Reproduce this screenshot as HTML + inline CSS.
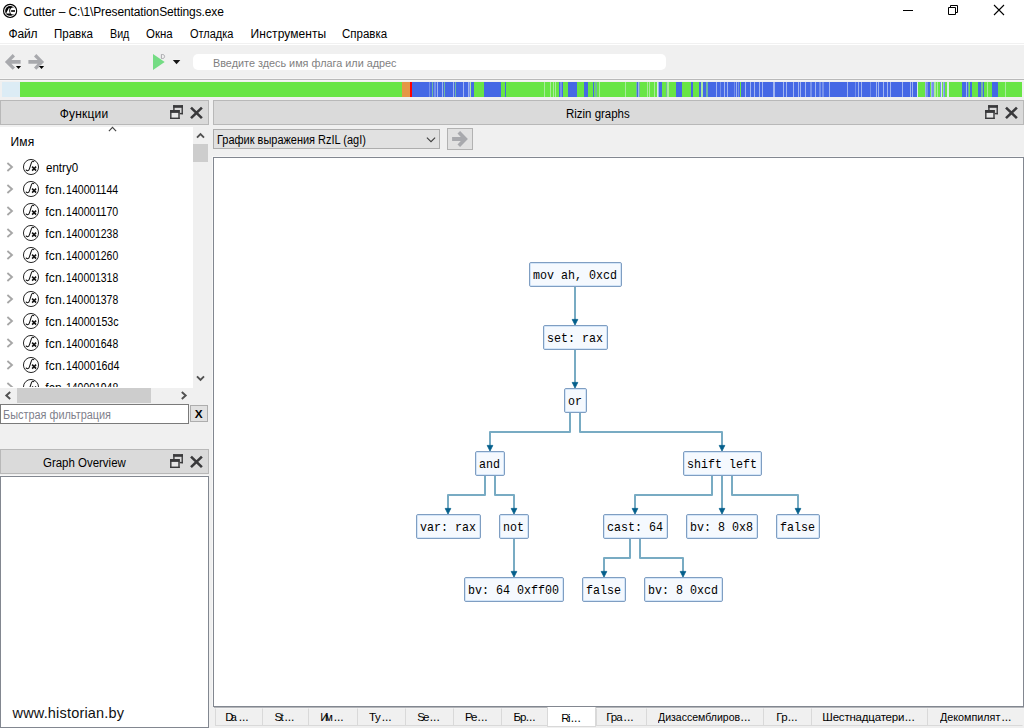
<!DOCTYPE html>
<html lang="ru"><head><meta charset="utf-8"><title>Cutter</title>
<style>
html,body{margin:0;padding:0}
body{width:1024px;height:728px;position:relative;overflow:hidden;background:#f0f0f0;
 font-family:"Liberation Sans",sans-serif;font-size:12px;color:#000}
.abs,.txt span,.ico,.node,.edges,.navbar{position:absolute}
.txt span{white-space:pre;line-height:20px;display:block;transform-origin:0 0}
.white{background:#fff}
.dtitle{background:#dadada;border:1px solid #b8b8b8;box-sizing:border-box}
.view{background:#fff;border:1px solid #828790;box-sizing:border-box;box-shadow:-1px -1px 0 #f7f7f7}
.node{height:25px;box-sizing:border-box;border:1px solid #7f9ec2;border-radius:2px;background:#f5f9fe;
 box-shadow:inset 0 0 0 1px #d3e5f8;font-family:"Liberation Mono",monospace;font-size:13px;
 line-height:24px;white-space:pre;color:#000;overflow:hidden}
.node span{display:block;position:absolute;left:2.6px;top:1px;transform:scaleX(0.8974);transform-origin:0 0}
.edges{left:0;top:0;pointer-events:none}
.navbar{left:2px;top:82px}
.tab{position:absolute;top:708px;height:18px;box-sizing:border-box;border:1px solid #d9d9d9;border-top-color:#f4f4f4;background:#f0f0f0}
.btn{background:#e1e1e1;border:1px solid #adadad;box-sizing:border-box}
.clip{position:absolute;overflow:hidden}
</style></head>
<body>
<div class="abs white" style="left:0;top:0;width:1024px;height:43px"></div>
<div class="abs" style="left:0;top:43px;width:1024px;height:1px;background:#f1f1f1"></div>
<div class="abs white" style="left:0;top:44px;width:1024px;height:1px"></div>
<svg class="ico" style="left:2px;top:3px" width="17" height="16" viewBox="2 3 17 16"><circle cx="10.1" cy="10.9" r="6.55" fill="#fff" stroke="#000" stroke-width="1.15"/><circle cx="10.1" cy="10.9" r="4.95" fill="#000"/><path d="M8.9,7.9 L6.1,13.5 H9.9 Q8.6,10.6 9.6,7.9 Z" fill="#fff"/><ellipse cx="12.9" cy="11" rx="2.75" ry="3.5" fill="#fff"/><rect x="11.1" y="10.2" width="3.9" height="1.6" fill="#000"/></svg>
<svg class="ico" style="left:896px;top:0" width="128" height="24" viewBox="896 0 128 24" fill="none" stroke="#000" stroke-width="1"><path d="M903,10.5 H913"/><path d="M948.5,7.5 H955.5 V14.5 H948.5 Z M950.5,7.5 V5.5 H957.5 V12.5 H955.5"/><path d="M994,5 L1004,15 M1004,5 L994,15" stroke-width="1.1"/></svg>
<div class="abs" style="left:0;top:78px;width:1024px;height:3px;background:#f5f5f5"></div><div class="abs" style="left:0;top:79px;width:1024px;height:1px;background:#b9b9b9"></div>
<svg class="ico" style="left:0;top:50px" width="50" height="24" viewBox="0 50 50 24"><g fill="#a8a9ad"><path d="M4.9,61.9 L12.7,54.0 L15.0,56.4 L11.4,60.1 L20.6,60.1 L20.6,63.7 L11.4,63.7 L15.0,67.4 L12.7,69.8 Z"/><path d="M44.1,61.9 L36.3,54.0 L34.0,56.4 L37.6,60.1 L28.4,60.1 L28.4,63.7 L37.6,63.7 L34.0,67.4 L36.3,69.8 Z"/></g><g fill="#000" stroke="#f6f6f6" stroke-width="0.6" paint-order="stroke"><path d="M15.9,66 H21.1 L18.5,68.9 Z"/><path d="M38.9,66 H44.1 L41.5,68.9 Z"/></g></svg>
<svg class="ico" style="left:150px;top:50px" width="36" height="24" viewBox="150 50 36 24"><path d="M153,53.9 L164.7,61.95 L153,70 Z" fill="#74dc84"/><path d="M161.4,54.5 V58.5 H162.5 C165.3,58.5 165.3,54.5 162.5,54.5 Z" fill="none" stroke="#a2a2a6" stroke-width="0.9"/><path d="M172.8,60 H180.3 L176.55,64.3 Z" fill="#151515" stroke="#f8f8f8" stroke-width="0.6" paint-order="stroke"/></svg>
<div class="abs white" style="left:193px;top:54px;width:473px;height:16px;border-radius:5px"></div>
<svg class="navbar" width="1020" height="15" viewBox="0 0 1020 15" shape-rendering="crispEdges"><rect x="0" y="0" width="18" height="15" fill="#dcecf5"/><rect x="18" y="0" width="382" height="15" fill="#68e545"/><rect x="400" y="0" width="8" height="15" fill="#e59645"/><rect x="408" y="0" width="2" height="15" fill="#ff0000"/><rect x="410" y="0" width="17" height="15" fill="#4568e5"/><rect x="427" y="0" width="1" height="15" fill="#7590ea"/><rect x="428" y="0" width="2" height="15" fill="#4568e5"/><rect x="430" y="0" width="1" height="15" fill="#70b8a0"/><rect x="431" y="0" width="1" height="15" fill="#4568e5"/><rect x="432" y="0" width="2" height="15" fill="#7590ea"/><rect x="434" y="0" width="1" height="15" fill="#4568e5"/><rect x="435" y="0" width="1" height="15" fill="#a0b4f0"/><rect x="436" y="0" width="4" height="15" fill="#4568e5"/><rect x="440" y="0" width="1" height="15" fill="#a0b4f0"/><rect x="441" y="0" width="1" height="15" fill="#4568e5"/><rect x="442" y="0" width="1" height="15" fill="#70b8a0"/><rect x="443" y="0" width="8" height="15" fill="#4568e5"/><rect x="451" y="0" width="1" height="15" fill="#a0b4f0"/><rect x="452" y="0" width="1" height="15" fill="#4568e5"/><rect x="453" y="0" width="1" height="15" fill="#70b8a0"/><rect x="454" y="0" width="7" height="15" fill="#4568e5"/><rect x="461" y="0" width="1" height="15" fill="#a0b4f0"/><rect x="462" y="0" width="4" height="15" fill="#4568e5"/><rect x="466" y="0" width="1" height="15" fill="#a0b4f0"/><rect x="467" y="0" width="1" height="15" fill="#7590ea"/><rect x="468" y="0" width="1" height="15" fill="#a8eb9c"/><rect x="469" y="0" width="3" height="15" fill="#4568e5"/><rect x="472" y="0" width="10" height="15" fill="#68e545"/><rect x="482" y="0" width="17" height="15" fill="#4568e5"/><rect x="499" y="0" width="4" height="15" fill="#68e545"/><rect x="503" y="0" width="1" height="15" fill="#4568e5"/><rect x="504" y="0" width="38" height="15" fill="#68e545"/><rect x="542" y="0" width="1" height="15" fill="#a8eb9c"/><rect x="543" y="0" width="5" height="15" fill="#68e545"/><rect x="548" y="0" width="1" height="15" fill="#a8eb9c"/><rect x="549" y="0" width="2" height="15" fill="#68e545"/><rect x="551" y="0" width="1" height="15" fill="#a8eb9c"/><rect x="552" y="0" width="1" height="15" fill="#68e545"/><rect x="553" y="0" width="1" height="15" fill="#a8eb9c"/><rect x="554" y="0" width="3" height="15" fill="#68e545"/><rect x="557" y="0" width="1" height="15" fill="#4568e5"/><rect x="558" y="0" width="2" height="15" fill="#7590ea"/><rect x="560" y="0" width="1" height="15" fill="#4568e5"/><rect x="561" y="0" width="5" height="15" fill="#68e545"/><rect x="566" y="0" width="9" height="15" fill="#4568e5"/><rect x="575" y="0" width="7" height="15" fill="#68e545"/><rect x="582" y="0" width="4" height="15" fill="#4568e5"/><rect x="586" y="0" width="5" height="15" fill="#68e545"/><rect x="591" y="0" width="1" height="15" fill="#4568e5"/><rect x="592" y="0" width="1" height="15" fill="#68e545"/><rect x="593" y="0" width="2" height="15" fill="#70b8a0"/><rect x="595" y="0" width="2" height="15" fill="#68e545"/><rect x="597" y="0" width="1" height="15" fill="#a8eb9c"/><rect x="598" y="0" width="25" height="15" fill="#68e545"/><rect x="623" y="0" width="1" height="15" fill="#a8eb9c"/><rect x="624" y="0" width="10" height="15" fill="#68e545"/><rect x="634" y="0" width="1" height="15" fill="#70b8a0"/><rect x="635" y="0" width="1" height="15" fill="#4568e5"/><rect x="636" y="0" width="1" height="15" fill="#a0b4f0"/><rect x="637" y="0" width="1" height="15" fill="#70b8a0"/><rect x="638" y="0" width="7" height="15" fill="#68e545"/><rect x="645" y="0" width="1" height="15" fill="#a8eb9c"/><rect x="646" y="0" width="1" height="15" fill="#68e545"/><rect x="647" y="0" width="1" height="15" fill="#a8eb9c"/><rect x="648" y="0" width="4" height="15" fill="#68e545"/><rect x="652" y="0" width="1" height="15" fill="#a8eb9c"/><rect x="653" y="0" width="2" height="15" fill="#68e545"/><rect x="655" y="0" width="1" height="15" fill="#d8ece8"/><rect x="656" y="0" width="1" height="15" fill="#a0b4f0"/><rect x="657" y="0" width="3" height="15" fill="#4568e5"/><rect x="660" y="0" width="4" height="15" fill="#68e545"/><rect x="664" y="0" width="1" height="15" fill="#70b8a0"/><rect x="665" y="0" width="2" height="15" fill="#a8eb9c"/><rect x="667" y="0" width="7" height="15" fill="#68e545"/><rect x="674" y="0" width="6" height="15" fill="#4568e5"/><rect x="680" y="0" width="9" height="15" fill="#68e545"/><rect x="689" y="0" width="2" height="15" fill="#4568e5"/><rect x="691" y="0" width="6" height="15" fill="#68e545"/><rect x="697" y="0" width="2" height="15" fill="#4568e5"/><rect x="699" y="0" width="2" height="15" fill="#a8eb9c"/><rect x="701" y="0" width="3" height="15" fill="#4568e5"/><rect x="704" y="0" width="2" height="15" fill="#70b8a0"/><rect x="706" y="0" width="8" height="15" fill="#4568e5"/><rect x="714" y="0" width="1" height="15" fill="#a0b4f0"/><rect x="715" y="0" width="3" height="15" fill="#4568e5"/><rect x="718" y="0" width="1" height="15" fill="#7590ea"/><rect x="719" y="0" width="3" height="15" fill="#4568e5"/><rect x="722" y="0" width="1" height="15" fill="#a0b4f0"/><rect x="723" y="0" width="2" height="15" fill="#4568e5"/><rect x="725" y="0" width="1" height="15" fill="#a0b4f0"/><rect x="726" y="0" width="6" height="15" fill="#4568e5"/><rect x="732" y="0" width="1" height="15" fill="#7590ea"/><rect x="733" y="0" width="1" height="15" fill="#4568e5"/><rect x="734" y="0" width="1" height="15" fill="#a0b4f0"/><rect x="735" y="0" width="1" height="15" fill="#4568e5"/><rect x="736" y="0" width="1" height="15" fill="#7590ea"/><rect x="737" y="0" width="1" height="15" fill="#4568e5"/><rect x="738" y="0" width="1" height="15" fill="#68e545"/><rect x="739" y="0" width="4" height="15" fill="#4568e5"/><rect x="743" y="0" width="1" height="15" fill="#a0b4f0"/><rect x="744" y="0" width="4" height="15" fill="#4568e5"/><rect x="748" y="0" width="1" height="15" fill="#a0b4f0"/><rect x="749" y="0" width="3" height="15" fill="#4568e5"/><rect x="752" y="0" width="1" height="15" fill="#a0b4f0"/><rect x="753" y="0" width="4" height="15" fill="#4568e5"/><rect x="757" y="0" width="1" height="15" fill="#a0b4f0"/><rect x="758" y="0" width="2" height="15" fill="#4568e5"/><rect x="760" y="0" width="1" height="15" fill="#a0b4f0"/><rect x="761" y="0" width="10" height="15" fill="#4568e5"/><rect x="771" y="0" width="2" height="15" fill="#a0b4f0"/><rect x="773" y="0" width="8" height="15" fill="#4568e5"/><rect x="781" y="0" width="1" height="15" fill="#a0b4f0"/><rect x="782" y="0" width="2" height="15" fill="#4568e5"/><rect x="784" y="0" width="1" height="15" fill="#a0b4f0"/><rect x="785" y="0" width="6" height="15" fill="#4568e5"/><rect x="791" y="0" width="1" height="15" fill="#a0b4f0"/><rect x="792" y="0" width="4" height="15" fill="#4568e5"/><rect x="796" y="0" width="1" height="15" fill="#a0b4f0"/><rect x="797" y="0" width="1" height="15" fill="#4568e5"/><rect x="798" y="0" width="1" height="15" fill="#a0b4f0"/><rect x="799" y="0" width="4" height="15" fill="#4568e5"/><rect x="803" y="0" width="1" height="15" fill="#a0b4f0"/><rect x="804" y="0" width="4" height="15" fill="#4568e5"/><rect x="808" y="0" width="2" height="15" fill="#7590ea"/><rect x="810" y="0" width="3" height="15" fill="#4568e5"/><rect x="813" y="0" width="1" height="15" fill="#a0b4f0"/><rect x="814" y="0" width="3" height="15" fill="#4568e5"/><rect x="817" y="0" width="2" height="15" fill="#7590ea"/><rect x="819" y="0" width="1" height="15" fill="#4568e5"/><rect x="820" y="0" width="2" height="15" fill="#7590ea"/><rect x="822" y="0" width="5" height="15" fill="#4568e5"/><rect x="827" y="0" width="1" height="15" fill="#a0b4f0"/><rect x="828" y="0" width="17" height="15" fill="#4568e5"/><rect x="845" y="0" width="1" height="15" fill="#a0b4f0"/><rect x="846" y="0" width="7" height="15" fill="#4568e5"/><rect x="853" y="0" width="1" height="15" fill="#7590ea"/><rect x="854" y="0" width="2" height="15" fill="#4568e5"/><rect x="856" y="0" width="1" height="15" fill="#a0b4f0"/><rect x="857" y="0" width="2" height="15" fill="#4568e5"/><rect x="859" y="0" width="1" height="15" fill="#a0b4f0"/><rect x="860" y="0" width="8" height="15" fill="#4568e5"/><rect x="868" y="0" width="1" height="15" fill="#7590ea"/><rect x="869" y="0" width="5" height="15" fill="#4568e5"/><rect x="874" y="0" width="1" height="15" fill="#a0b4f0"/><rect x="875" y="0" width="1" height="15" fill="#4568e5"/><rect x="876" y="0" width="1" height="15" fill="#a0b4f0"/><rect x="877" y="0" width="4" height="15" fill="#4568e5"/><rect x="881" y="0" width="1" height="15" fill="#a0b4f0"/><rect x="882" y="0" width="3" height="15" fill="#4568e5"/><rect x="885" y="0" width="1" height="15" fill="#a0b4f0"/><rect x="886" y="0" width="2" height="15" fill="#4568e5"/><rect x="888" y="0" width="1" height="15" fill="#a0b4f0"/><rect x="889" y="0" width="11" height="15" fill="#4568e5"/><rect x="900" y="0" width="1" height="15" fill="#a0b4f0"/><rect x="901" y="0" width="7" height="15" fill="#4568e5"/><rect x="908" y="0" width="1" height="15" fill="#a0b4f0"/><rect x="909" y="0" width="1" height="15" fill="#4568e5"/><rect x="910" y="0" width="1" height="15" fill="#a0b4f0"/><rect x="911" y="0" width="4" height="15" fill="#4568e5"/><rect x="915" y="0" width="1" height="15" fill="#d8ece8"/><rect x="916" y="0" width="7" height="15" fill="#68e545"/><rect x="923" y="0" width="1" height="15" fill="#a0b4f0"/><rect x="924" y="0" width="2" height="15" fill="#7590ea"/><rect x="926" y="0" width="2" height="15" fill="#4568e5"/><rect x="928" y="0" width="1" height="15" fill="#68e545"/><rect x="929" y="0" width="1" height="15" fill="#a0b4f0"/><rect x="930" y="0" width="2" height="15" fill="#7590ea"/><rect x="932" y="0" width="2" height="15" fill="#a8eb9c"/><rect x="934" y="0" width="1" height="15" fill="#68e545"/><rect x="935" y="0" width="1" height="15" fill="#a8eb9c"/><rect x="936" y="0" width="2" height="15" fill="#68e545"/><rect x="938" y="0" width="1" height="15" fill="#7590ea"/><rect x="939" y="0" width="1" height="15" fill="#d8ece8"/><rect x="940" y="0" width="1" height="15" fill="#68e545"/><rect x="941" y="0" width="1" height="15" fill="#a0b4f0"/><rect x="942" y="0" width="1" height="15" fill="#7590ea"/><rect x="943" y="0" width="2" height="15" fill="#68e545"/><rect x="945" y="0" width="2" height="15" fill="#d8ece8"/><rect x="947" y="0" width="13" height="15" fill="#68e545"/><rect x="960" y="0" width="4" height="15" fill="#4568e5"/><rect x="964" y="0" width="1" height="15" fill="#a0b4f0"/><rect x="965" y="0" width="1" height="15" fill="#4568e5"/><rect x="966" y="0" width="1" height="15" fill="#70b8a0"/><rect x="967" y="0" width="1" height="15" fill="#68e545"/><rect x="968" y="0" width="2" height="15" fill="#4568e5"/><rect x="970" y="0" width="6" height="15" fill="#68e545"/><rect x="976" y="0" width="3" height="15" fill="#4568e5"/><rect x="979" y="0" width="2" height="15" fill="#70b8a0"/><rect x="981" y="0" width="1" height="15" fill="#4568e5"/><rect x="982" y="0" width="3" height="15" fill="#68e545"/><rect x="985" y="0" width="1" height="15" fill="#a8eb9c"/><rect x="986" y="0" width="4" height="15" fill="#68e545"/><rect x="990" y="0" width="6" height="15" fill="#4568e5"/><rect x="996" y="0" width="7" height="15" fill="#68e545"/><rect x="1003" y="0" width="1" height="15" fill="#a8eb9c"/><rect x="1004" y="0" width="16" height="15" fill="#68e545"/></svg>
<div class="abs dtitle" style="left:0;top:100px;width:209px;height:25px"></div>
<svg class="ico" style="left:170px;top:105px" width="14" height="15" viewBox="0 0 14 15"><g fill="#39393b"><rect x="3.2" y="0.1" width="9.7" height="2.7"/><rect x="11.55" y="0.1" width="1.35" height="9.2"/><rect x="3.2" y="0.1" width="1.4" height="5"/><rect x="9.6" y="7.9" width="3.3" height="1.4"/><rect x="1.4" y="7.8" width="7" height="4.9" fill="#e6e6e6"/><rect x="0.1" y="5" width="9.6" height="2.9"/><rect x="0.1" y="5" width="1.4" height="9"/><rect x="8.3" y="5" width="1.4" height="9"/><rect x="0.1" y="12.6" width="9.6" height="1.4"/></g></svg><svg class="ico" style="left:190px;top:106px" width="14" height="14" viewBox="0 0 14 14"><path d="M1.0,1.6 L11.9,12.1 M11.9,1.6 L1.0,12.1" stroke="#39393b" stroke-width="2.6" fill="none"/></svg>
<div class="abs white" style="left:0;top:127px;width:193px;height:261px"></div>
<svg class="ico" style="left:107px;top:126px" width="12" height="7" viewBox="0 0 12 7"><path d="M1.9,5.2 L5.5,1.4 L9.1,5.2" fill="none" stroke="#444" stroke-width="1.15"/></svg>
<div class="clip txt" style="left:0;top:126px;width:193px;height:261px"><div class="abs" style="left:0;top:-126px">
<svg class="ico" style="left:5px;top:161.3px" width="10" height="12" viewBox="0 0 10 12"><path d="M2.4,2.0 L7.0,6 L2.4,10.0" fill="none" stroke="#a6a6a6" stroke-width="1.8"/></svg><svg class="ico" style="left:22px;top:158px" width="18" height="18" viewBox="0 0 18 18"><circle cx="9" cy="9" r="7.55" fill="#fff" stroke="#1c1c1c" stroke-width="0.95"/><path d="M4.1,12.0 C5.3,13.1 6.8,12.9 7.4,10.9 L9.3,5.1 C9.9,3.2 10.9,2.9 11.8,3.7" fill="none" stroke="#111" stroke-width="1.05" stroke-linecap="round"/><path d="M10.1,8.6 L14.1,12.6 M14.1,8.6 L10.1,12.6" stroke="#111" stroke-width="1.5"/></svg>
<svg class="ico" style="left:5px;top:183.3px" width="10" height="12" viewBox="0 0 10 12"><path d="M2.4,2.0 L7.0,6 L2.4,10.0" fill="none" stroke="#a6a6a6" stroke-width="1.8"/></svg><svg class="ico" style="left:22px;top:180px" width="18" height="18" viewBox="0 0 18 18"><circle cx="9" cy="9" r="7.55" fill="#fff" stroke="#1c1c1c" stroke-width="0.95"/><path d="M4.1,12.0 C5.3,13.1 6.8,12.9 7.4,10.9 L9.3,5.1 C9.9,3.2 10.9,2.9 11.8,3.7" fill="none" stroke="#111" stroke-width="1.05" stroke-linecap="round"/><path d="M10.1,8.6 L14.1,12.6 M14.1,8.6 L10.1,12.6" stroke="#111" stroke-width="1.5"/></svg>
<svg class="ico" style="left:5px;top:205.3px" width="10" height="12" viewBox="0 0 10 12"><path d="M2.4,2.0 L7.0,6 L2.4,10.0" fill="none" stroke="#a6a6a6" stroke-width="1.8"/></svg><svg class="ico" style="left:22px;top:202px" width="18" height="18" viewBox="0 0 18 18"><circle cx="9" cy="9" r="7.55" fill="#fff" stroke="#1c1c1c" stroke-width="0.95"/><path d="M4.1,12.0 C5.3,13.1 6.8,12.9 7.4,10.9 L9.3,5.1 C9.9,3.2 10.9,2.9 11.8,3.7" fill="none" stroke="#111" stroke-width="1.05" stroke-linecap="round"/><path d="M10.1,8.6 L14.1,12.6 M14.1,8.6 L10.1,12.6" stroke="#111" stroke-width="1.5"/></svg>
<svg class="ico" style="left:5px;top:227.3px" width="10" height="12" viewBox="0 0 10 12"><path d="M2.4,2.0 L7.0,6 L2.4,10.0" fill="none" stroke="#a6a6a6" stroke-width="1.8"/></svg><svg class="ico" style="left:22px;top:224px" width="18" height="18" viewBox="0 0 18 18"><circle cx="9" cy="9" r="7.55" fill="#fff" stroke="#1c1c1c" stroke-width="0.95"/><path d="M4.1,12.0 C5.3,13.1 6.8,12.9 7.4,10.9 L9.3,5.1 C9.9,3.2 10.9,2.9 11.8,3.7" fill="none" stroke="#111" stroke-width="1.05" stroke-linecap="round"/><path d="M10.1,8.6 L14.1,12.6 M14.1,8.6 L10.1,12.6" stroke="#111" stroke-width="1.5"/></svg>
<svg class="ico" style="left:5px;top:249.3px" width="10" height="12" viewBox="0 0 10 12"><path d="M2.4,2.0 L7.0,6 L2.4,10.0" fill="none" stroke="#a6a6a6" stroke-width="1.8"/></svg><svg class="ico" style="left:22px;top:246px" width="18" height="18" viewBox="0 0 18 18"><circle cx="9" cy="9" r="7.55" fill="#fff" stroke="#1c1c1c" stroke-width="0.95"/><path d="M4.1,12.0 C5.3,13.1 6.8,12.9 7.4,10.9 L9.3,5.1 C9.9,3.2 10.9,2.9 11.8,3.7" fill="none" stroke="#111" stroke-width="1.05" stroke-linecap="round"/><path d="M10.1,8.6 L14.1,12.6 M14.1,8.6 L10.1,12.6" stroke="#111" stroke-width="1.5"/></svg>
<svg class="ico" style="left:5px;top:271.3px" width="10" height="12" viewBox="0 0 10 12"><path d="M2.4,2.0 L7.0,6 L2.4,10.0" fill="none" stroke="#a6a6a6" stroke-width="1.8"/></svg><svg class="ico" style="left:22px;top:268px" width="18" height="18" viewBox="0 0 18 18"><circle cx="9" cy="9" r="7.55" fill="#fff" stroke="#1c1c1c" stroke-width="0.95"/><path d="M4.1,12.0 C5.3,13.1 6.8,12.9 7.4,10.9 L9.3,5.1 C9.9,3.2 10.9,2.9 11.8,3.7" fill="none" stroke="#111" stroke-width="1.05" stroke-linecap="round"/><path d="M10.1,8.6 L14.1,12.6 M14.1,8.6 L10.1,12.6" stroke="#111" stroke-width="1.5"/></svg>
<svg class="ico" style="left:5px;top:293.3px" width="10" height="12" viewBox="0 0 10 12"><path d="M2.4,2.0 L7.0,6 L2.4,10.0" fill="none" stroke="#a6a6a6" stroke-width="1.8"/></svg><svg class="ico" style="left:22px;top:290px" width="18" height="18" viewBox="0 0 18 18"><circle cx="9" cy="9" r="7.55" fill="#fff" stroke="#1c1c1c" stroke-width="0.95"/><path d="M4.1,12.0 C5.3,13.1 6.8,12.9 7.4,10.9 L9.3,5.1 C9.9,3.2 10.9,2.9 11.8,3.7" fill="none" stroke="#111" stroke-width="1.05" stroke-linecap="round"/><path d="M10.1,8.6 L14.1,12.6 M14.1,8.6 L10.1,12.6" stroke="#111" stroke-width="1.5"/></svg>
<svg class="ico" style="left:5px;top:315.3px" width="10" height="12" viewBox="0 0 10 12"><path d="M2.4,2.0 L7.0,6 L2.4,10.0" fill="none" stroke="#a6a6a6" stroke-width="1.8"/></svg><svg class="ico" style="left:22px;top:312px" width="18" height="18" viewBox="0 0 18 18"><circle cx="9" cy="9" r="7.55" fill="#fff" stroke="#1c1c1c" stroke-width="0.95"/><path d="M4.1,12.0 C5.3,13.1 6.8,12.9 7.4,10.9 L9.3,5.1 C9.9,3.2 10.9,2.9 11.8,3.7" fill="none" stroke="#111" stroke-width="1.05" stroke-linecap="round"/><path d="M10.1,8.6 L14.1,12.6 M14.1,8.6 L10.1,12.6" stroke="#111" stroke-width="1.5"/></svg>
<svg class="ico" style="left:5px;top:337.3px" width="10" height="12" viewBox="0 0 10 12"><path d="M2.4,2.0 L7.0,6 L2.4,10.0" fill="none" stroke="#a6a6a6" stroke-width="1.8"/></svg><svg class="ico" style="left:22px;top:334px" width="18" height="18" viewBox="0 0 18 18"><circle cx="9" cy="9" r="7.55" fill="#fff" stroke="#1c1c1c" stroke-width="0.95"/><path d="M4.1,12.0 C5.3,13.1 6.8,12.9 7.4,10.9 L9.3,5.1 C9.9,3.2 10.9,2.9 11.8,3.7" fill="none" stroke="#111" stroke-width="1.05" stroke-linecap="round"/><path d="M10.1,8.6 L14.1,12.6 M14.1,8.6 L10.1,12.6" stroke="#111" stroke-width="1.5"/></svg>
<svg class="ico" style="left:5px;top:359.3px" width="10" height="12" viewBox="0 0 10 12"><path d="M2.4,2.0 L7.0,6 L2.4,10.0" fill="none" stroke="#a6a6a6" stroke-width="1.8"/></svg><svg class="ico" style="left:22px;top:356px" width="18" height="18" viewBox="0 0 18 18"><circle cx="9" cy="9" r="7.55" fill="#fff" stroke="#1c1c1c" stroke-width="0.95"/><path d="M4.1,12.0 C5.3,13.1 6.8,12.9 7.4,10.9 L9.3,5.1 C9.9,3.2 10.9,2.9 11.8,3.7" fill="none" stroke="#111" stroke-width="1.05" stroke-linecap="round"/><path d="M10.1,8.6 L14.1,12.6 M14.1,8.6 L10.1,12.6" stroke="#111" stroke-width="1.5"/></svg>
<svg class="ico" style="left:5px;top:381.3px" width="10" height="12" viewBox="0 0 10 12"><path d="M2.4,2.0 L7.0,6 L2.4,10.0" fill="none" stroke="#a6a6a6" stroke-width="1.8"/></svg><svg class="ico" style="left:22px;top:378px" width="18" height="18" viewBox="0 0 18 18"><circle cx="9" cy="9" r="7.55" fill="#fff" stroke="#1c1c1c" stroke-width="0.95"/><path d="M4.1,12.0 C5.3,13.1 6.8,12.9 7.4,10.9 L9.3,5.1 C9.9,3.2 10.9,2.9 11.8,3.7" fill="none" stroke="#111" stroke-width="1.05" stroke-linecap="round"/><path d="M10.1,8.6 L14.1,12.6 M14.1,8.6 L10.1,12.6" stroke="#111" stroke-width="1.5"/></svg>
<span class="tree" style="left:45.60px;top:158.00px;font-size:12px;transform:scaleX(0.9621);color:#000;">entry0</span>
<span class="tree" style="left:45.25px;top:180.00px;font-size:12px;letter-spacing:0.247px;color:#000;">fcn.</span>
<span class="tree" style="left:66.25px;top:180.00px;font-size:12px;transform:scaleX(0.8824);color:#000;">140001144</span>
<span class="tree" style="left:45.25px;top:202.00px;font-size:12px;letter-spacing:0.247px;color:#000;">fcn.</span>
<span class="tree" style="left:66.25px;top:202.00px;font-size:12px;transform:scaleX(0.8824);color:#000;">140001170</span>
<span class="tree" style="left:45.25px;top:224.00px;font-size:12px;letter-spacing:0.247px;color:#000;">fcn.</span>
<span class="tree" style="left:66.25px;top:224.00px;font-size:12px;transform:scaleX(0.8693);color:#000;">140001238</span>
<span class="tree" style="left:45.25px;top:246.00px;font-size:12px;letter-spacing:0.247px;color:#000;">fcn.</span>
<span class="tree" style="left:66.25px;top:246.00px;font-size:12px;transform:scaleX(0.8693);color:#000;">140001260</span>
<span class="tree" style="left:45.25px;top:268.00px;font-size:12px;letter-spacing:0.247px;color:#000;">fcn.</span>
<span class="tree" style="left:66.25px;top:268.00px;font-size:12px;transform:scaleX(0.8693);color:#000;">140001318</span>
<span class="tree" style="left:45.25px;top:290.00px;font-size:12px;letter-spacing:0.247px;color:#000;">fcn.</span>
<span class="tree" style="left:66.25px;top:290.00px;font-size:12px;transform:scaleX(0.8693);color:#000;">140001378</span>
<span class="tree" style="left:45.25px;top:312.00px;font-size:12px;letter-spacing:0.247px;color:#000;">fcn.</span>
<span class="tree" style="left:66.25px;top:312.00px;font-size:12px;transform:scaleX(0.8840);color:#000;">14000153c</span>
<span class="tree" style="left:45.25px;top:334.00px;font-size:12px;letter-spacing:0.247px;color:#000;">fcn.</span>
<span class="tree" style="left:66.25px;top:334.00px;font-size:12px;transform:scaleX(0.8693);color:#000;">140001648</span>
<span class="tree" style="left:45.25px;top:356.00px;font-size:12px;letter-spacing:0.247px;color:#000;">fcn.</span>
<span class="tree" style="left:66.25px;top:356.00px;font-size:12px;transform:scaleX(0.8884);color:#000;">1400016d4</span>
<span class="tree" style="left:45.25px;top:378.00px;font-size:12px;letter-spacing:0.247px;color:#000;">fcn.</span>
<span class="tree" style="left:66.25px;top:378.00px;font-size:12px;transform:scaleX(0.8693);color:#000;">140001948</span>
</div></div>
<div class="abs" style="left:193px;top:144px;width:15px;height:18px;background:#cdcdcd"></div>
<svg class="ico" style="left:196px;top:132px" width="9" height="7" viewBox="0 0 9 7"><path d="M1,5.7 L4.5,2.1 L8,5.7" fill="none" stroke="#505050" stroke-width="1.9"/></svg>
<svg class="ico" style="left:196px;top:375px" width="9" height="7" viewBox="0 0 9 7"><path d="M1,1.3 L4.5,4.9 L8,1.3" fill="none" stroke="#505050" stroke-width="1.9"/></svg>
<div class="abs" style="left:17px;top:388px;width:134px;height:15px;background:#cdcdcd"></div>
<svg class="ico" style="left:4px;top:391px" width="8" height="9" viewBox="0 0 8 9"><path d="M6.2,1 L2.3,4.5 L6.2,8" fill="none" stroke="#505050" stroke-width="1.9"/></svg>
<svg class="ico" style="left:180px;top:391px" width="8" height="9" viewBox="0 0 8 9"><path d="M1.8,1 L5.7,4.5 L1.8,8" fill="none" stroke="#505050" stroke-width="1.9"/></svg>
<div class="abs white" style="left:0;top:404px;width:189px;height:20px;border:1px solid #7a7a7a;box-sizing:border-box"></div>
<div class="abs btn" style="left:190px;top:405px;width:18px;height:17px"></div>
<div class="abs dtitle" style="left:0;top:449px;width:209px;height:25px"></div>
<svg class="ico" style="left:170px;top:454px" width="14" height="15" viewBox="0 0 14 15"><g fill="#39393b"><rect x="3.2" y="0.1" width="9.7" height="2.7"/><rect x="11.55" y="0.1" width="1.35" height="9.2"/><rect x="3.2" y="0.1" width="1.4" height="5"/><rect x="9.6" y="7.9" width="3.3" height="1.4"/><rect x="1.4" y="7.8" width="7" height="4.9" fill="#e6e6e6"/><rect x="0.1" y="5" width="9.6" height="2.9"/><rect x="0.1" y="5" width="1.4" height="9"/><rect x="8.3" y="5" width="1.4" height="9"/><rect x="0.1" y="12.6" width="9.6" height="1.4"/></g></svg><svg class="ico" style="left:190px;top:455px" width="14" height="14" viewBox="0 0 14 14"><path d="M1.0,1.6 L11.9,12.1 M11.9,1.6 L1.0,12.1" stroke="#39393b" stroke-width="2.6" fill="none"/></svg>
<div class="abs view" style="left:0;top:476px;width:209px;height:252px"></div>
<div class="abs dtitle" style="left:213px;top:100px;width:811px;height:25px"></div>
<svg class="ico" style="left:985px;top:105px" width="14" height="15" viewBox="0 0 14 15"><g fill="#39393b"><rect x="3.2" y="0.1" width="9.7" height="2.7"/><rect x="11.55" y="0.1" width="1.35" height="9.2"/><rect x="3.2" y="0.1" width="1.4" height="5"/><rect x="9.6" y="7.9" width="3.3" height="1.4"/><rect x="1.4" y="7.8" width="7" height="4.9" fill="#e6e6e6"/><rect x="0.1" y="5" width="9.6" height="2.9"/><rect x="0.1" y="5" width="1.4" height="9"/><rect x="8.3" y="5" width="1.4" height="9"/><rect x="0.1" y="12.6" width="9.6" height="1.4"/></g></svg><svg class="ico" style="left:1005px;top:106px" width="14" height="14" viewBox="0 0 14 14"><path d="M1.0,1.6 L11.9,12.1 M11.9,1.6 L1.0,12.1" stroke="#39393b" stroke-width="2.6" fill="none"/></svg>
<div class="abs btn" style="left:213px;top:129px;width:227px;height:20px"></div>
<svg class="ico" style="left:426px;top:136px" width="11" height="8" viewBox="0 0 11 8"><path d="M0.9,1.6 L5.0,5.7 L9.1,1.6" fill="none" stroke="#3c3c3c" stroke-width="1.05"/></svg>
<div class="abs btn" style="left:447px;top:128px;width:26px;height:22px;border-color:#b2b2b2"></div>
<svg class="ico" style="left:450px;top:129px" width="20" height="20" viewBox="450 129 20 20"><path d="M467.9,139 L460.1,130.9 L457.5,133.6 L460.8,137 H452.1 V141 H460.8 L457.5,144.5 L460.1,147.1 Z" fill="#a8a9ad"/></svg>
<div class="abs view" style="left:213px;top:157px;width:811px;height:550px"></div>
<svg class="edges" width="1024" height="728" viewBox="0 0 1024 728"><g fill="none" stroke="#78abc3" stroke-width="2" stroke-linejoin="round"><path d="M575,287 L575,320"/><path d="M575,350 L575,383"/><path d="M570,413 L570,432 L490,432 L490,446"/><path d="M580,413 L580,432 L722,432 L722,446"/><path d="M485,476 L485,495 L448,495 L448,509"/><path d="M495,476 L495,495 L514,495 L514,509"/><path d="M712,476 L712,495 L635,495 L635,509"/><path d="M722,476 L722,509"/><path d="M732,476 L732,495 L798,495 L798,509"/><path d="M514,539 L514,572"/><path d="M630,539 L630,558 L604,558 L604,572"/><path d="M640,539 L640,558 L683,558 L683,572"/></g><g fill="#045f8c" stroke="#045f8c" stroke-width="0.8" stroke-linejoin="round"><path d="M572.2,319.4 L577.8,319.4 L575,325 Z"/><path d="M572.2,382.4 L577.8,382.4 L575,388 Z"/><path d="M487.2,445.4 L492.8,445.4 L490,451 Z"/><path d="M719.2,445.4 L724.8,445.4 L722,451 Z"/><path d="M445.2,508.4 L450.8,508.4 L448,514 Z"/><path d="M511.2,508.4 L516.8,508.4 L514,514 Z"/><path d="M632.2,508.4 L637.8,508.4 L635,514 Z"/><path d="M719.2,508.4 L724.8,508.4 L722,514 Z"/><path d="M795.2,508.4 L800.8,508.4 L798,514 Z"/><path d="M511.2,571.4 L516.8,571.4 L514,577 Z"/><path d="M601.2,571.4 L606.8,571.4 L604,577 Z"/><path d="M680.2,571.4 L685.8,571.4 L683,577 Z"/></g></svg>
<div class="node" style="left:529px;top:262px;width:93px"><span>mov ah, 0xcd</span></div>
<div class="node" style="left:543px;top:325px;width:65px"><span>set: rax</span></div>
<div class="node" style="left:564px;top:388px;width:23px"><span>or</span></div>
<div class="node" style="left:475px;top:451px;width:30px"><span>and</span></div>
<div class="node" style="left:683px;top:451px;width:79px"><span>shift left</span></div>
<div class="node" style="left:416px;top:514px;width:65px"><span>var: rax</span></div>
<div class="node" style="left:499px;top:514px;width:30px"><span>not</span></div>
<div class="node" style="left:603px;top:514px;width:65px"><span>cast: 64</span></div>
<div class="node" style="left:686px;top:514px;width:72px"><span>bv: 8 0x8</span></div>
<div class="node" style="left:776px;top:514px;width:44px"><span>false</span></div>
<div class="node" style="left:464px;top:577px;width:100px"><span>bv: 64 0xff00</span></div>
<div class="node" style="left:582px;top:577px;width:44px"><span>false</span></div>
<div class="node" style="left:644px;top:577px;width:79px"><span>bv: 8 0xcd</span></div>
<div class="abs" style="left:214px;top:707px;width:810px;height:1px;background:#b4b6ba"></div>
<div class="tab" style="left:215px;width:48px"></div>
<div class="tab" style="left:262px;width:47px"></div>
<div class="tab" style="left:308px;width:50px"></div>
<div class="tab" style="left:357px;width:49px"></div>
<div class="tab" style="left:405px;width:49px"></div>
<div class="tab" style="left:453px;width:49px"></div>
<div class="tab" style="left:501px;width:47px"></div>
<div class="tab" style="left:596px;width:51px"></div>
<div class="tab" style="left:646px;width:118px"></div>
<div class="tab" style="left:763px;width:49px"></div>
<div class="tab" style="left:811px;width:117px"></div>
<div class="tab" style="left:927px;width:96px;border-right-color:#f0f0f0"></div>
<div class="abs white" style="left:547px;top:707px;width:49px;height:20px;box-sizing:border-box;border:1px solid #d9d9d9;border-top:none"></div>
<div class="txt"><span style="left:23.50px;top:2.00px;font-size:12px;letter-spacing:-0.119px;color:#000;">Cutter – C:\1\PresentationSettings.exe</span>
<span style="left:8.50px;top:24.00px;font-size:12px;letter-spacing:-0.167px;color:#000;">Файл</span>
<span style="left:53.50px;top:24.00px;font-size:12px;transform:scaleX(0.9606);color:#000;">Правка</span>
<span style="left:109.75px;top:24.00px;font-size:12px;transform:scaleX(0.8914);color:#000;">Вид</span>
<span style="left:145.70px;top:24.00px;font-size:12px;transform:scaleX(0.9535);color:#000;">Окна</span>
<span style="left:189.75px;top:24.00px;font-size:12px;transform:scaleX(0.9161);color:#000;">Отладка</span>
<span style="left:250.60px;top:24.00px;font-size:12px;letter-spacing:0.080px;color:#000;">Инструменты</span>
<span style="left:342.30px;top:24.00px;font-size:12px;transform:scaleX(0.9578);color:#000;">Справка</span>
<span style="left:212.75px;top:52.50px;font-size:11.5px;transform:scaleX(0.9425);color:#7f7f7f;">Введите здесь имя флага или адрес</span>
<span style="left:59.75px;top:103.50px;font-size:12px;letter-spacing:0.196px;color:#000;">Функции</span>
<span style="left:566.40px;top:104.00px;font-size:12px;transform:scaleX(0.9551);color:#000;">Rizin graphs</span>
<span style="left:42.50px;top:453.00px;font-size:12px;transform:scaleX(0.9549);color:#000;">Graph Overview</span>
<span style="left:10.60px;top:132.00px;font-size:12px;letter-spacing:0.137px;color:#000;">Имя</span>
<span style="left:2.50px;top:405.00px;font-size:12px;transform:scaleX(0.9073);color:#7f7f8c;">Быстрая фильтрация</span>
<span style="left:194.80px;top:404.20px;font-size:11.8px;color:#000;font-weight:bold;">X</span>
<span style="left:217.20px;top:130.00px;font-size:12px;transform:scaleX(0.9147);color:#000;">График выражения RzIL (agI)</span>
<span style="left:12.50px;top:702.75px;font-size:14.5px;letter-spacing:0.181px;color:#111;">www.historian.by</span>
<span style="left:225.30px;top:707.00px;font-size:11.5px;letter-spacing:-3.105px;color:#000;">Da</span>
<span style="left:238.65px;top:707.00px;font-size:12px;color:#000;">...</span>
<span style="left:274.50px;top:707.00px;font-size:11.5px;letter-spacing:-1.670px;color:#000;">St</span>
<span style="left:284.40px;top:707.00px;font-size:12px;color:#000;">...</span>
<span style="left:320.30px;top:707.00px;font-size:11.5px;letter-spacing:-3.466px;color:#000;">Им</span>
<span style="left:333.65px;top:707.00px;font-size:12px;color:#000;">...</span>
<span style="left:369.10px;top:707.00px;font-size:11.5px;letter-spacing:-0.379px;color:#000;">Ту</span>
<span style="left:381.65px;top:707.00px;font-size:12px;color:#000;">...</span>
<span style="left:417.25px;top:707.00px;font-size:11.5px;letter-spacing:-1.920px;color:#000;">Se</span>
<span style="left:429.75px;top:707.00px;font-size:12px;color:#000;">...</span>
<span style="left:465.10px;top:707.00px;font-size:11.5px;letter-spacing:-1.265px;color:#000;">Ре</span>
<span style="left:477.55px;top:707.00px;font-size:12px;color:#000;">...</span>
<span style="left:513.40px;top:707.00px;font-size:11.5px;letter-spacing:-0.947px;color:#000;">Бр</span>
<span style="left:525.65px;top:707.00px;font-size:12px;color:#000;">...</span>
<span style="left:561.30px;top:708.00px;font-size:11.5px;letter-spacing:-1.505px;color:#000;">Ri</span>
<span style="left:570.75px;top:708.00px;font-size:12px;color:#000;">...</span>
<span style="left:606.30px;top:707.00px;font-size:11.5px;letter-spacing:-1.039px;color:#000;">Гра</span>
<span style="left:623.55px;top:707.00px;font-size:12px;color:#000;">...</span>
<span style="left:657.80px;top:707.00px;font-size:11.5px;transform:scaleX(0.9157);color:#000;">Дизассемблиров</span>
<span style="left:740.55px;top:707.00px;font-size:12px;color:#000;">...</span>
<span style="left:776.20px;top:707.00px;font-size:11.5px;letter-spacing:-0.582px;color:#000;">Гр</span>
<span style="left:787.65px;top:707.00px;font-size:12px;color:#000;">...</span>
<span style="left:822.30px;top:707.00px;font-size:11.5px;letter-spacing:-0.197px;color:#000;">Шестнадцатери</span>
<span style="left:904.75px;top:707.00px;font-size:12px;color:#000;">...</span>
<span style="left:939.80px;top:707.00px;font-size:11.5px;transform:scaleX(0.9351);color:#000;">Декомпилят</span>
<span style="left:1001.45px;top:707.00px;font-size:12px;color:#000;">...</span></div>
</body></html>
